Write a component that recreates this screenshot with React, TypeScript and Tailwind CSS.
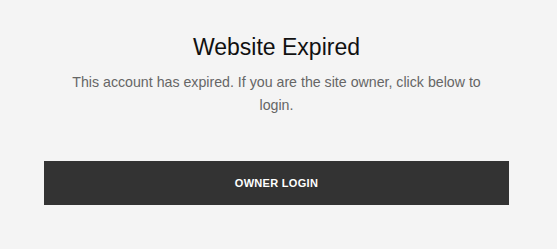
export default function App() {
  return (
    <div
      className="min-h-screen w-full bg-[#f4f4f4] pl-[44px] pr-[48px] pt-[33px]"
      style={{ fontFamily: '"Liberation Sans", Arial, sans-serif' }}>
      <div className="flex flex-col items-center">
        <h1 className="text-[23px] leading-[28px] text-[#111]">Website Expired</h1>
        <p className="mt-[10px] px-[22px] text-center text-[14.2px] leading-[23px] text-[#666]">
          This account has expired. If you are the site owner, click below to login.
        </p>
        <button className="mt-[44px] flex h-[44px] w-full items-center justify-center bg-[#333] text-[11px] font-bold tracking-[0.3px] text-white">
          OWNER LOGIN
        </button>
      </div>
    </div>
  );
}
